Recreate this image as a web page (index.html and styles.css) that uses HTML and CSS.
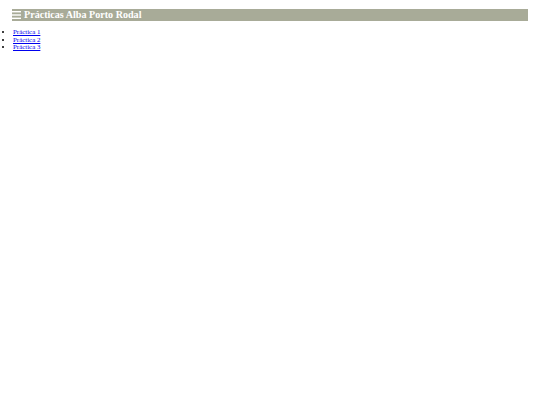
FILE: index.html
```html
<!DOCTYPE html>
<html lang="es">
<head>
<meta charset="utf-8">
<title>Prácticas Alba Porto Rodal</title>
<link rel="stylesheet" href="styles.css">
</head>
<body>
<header class="bar">
  <h1 class="title"><svg class="menu" width="9" height="8" viewBox="0 0 9 8" aria-hidden="true"><rect x="0" y="0" width="9" height="1.4" fill="#ffffff"/><rect x="0" y="3.3" width="9" height="1.4" fill="#ffffff"/><rect x="0" y="6.6" width="9" height="1.4" fill="#ffffff"/></svg><span class="text">Prácticas Alba Porto Rodal</span></h1>
</header>
<ul class="links">
  <li><a href="#">Práctica 1</a></li>
  <li><a href="#">Práctica 2</a></li>
  <li><a href="#">Práctica 3</a></li>
</ul>
</body>
</html>
```
FILE: styles.css
```css
html, body {
  margin: 0;
  background: #ffffff;
}
body {
  font-family: "Liberation Serif", "Times New Roman", serif;
}
.bar {
  margin: 9px 12px 0 12px;
  background: #a8ab98;
  height: 12px;
}
.title {
  margin: 0;
  display: flex;
  align-items: center;
  gap: 3px;
  height: 12px;
  font-size: 10.1px;
  line-height: 12px;
  font-weight: bold;
  color: #ffffff;
}
.menu {
  display: block;
  flex: none;
}
.links {
  margin: 7px 0 0 0;
  padding-left: 13px;
  font-size: 6.9px;
  line-height: 7.5px;
}
.links a {
  color: #0000ee;
}
```
